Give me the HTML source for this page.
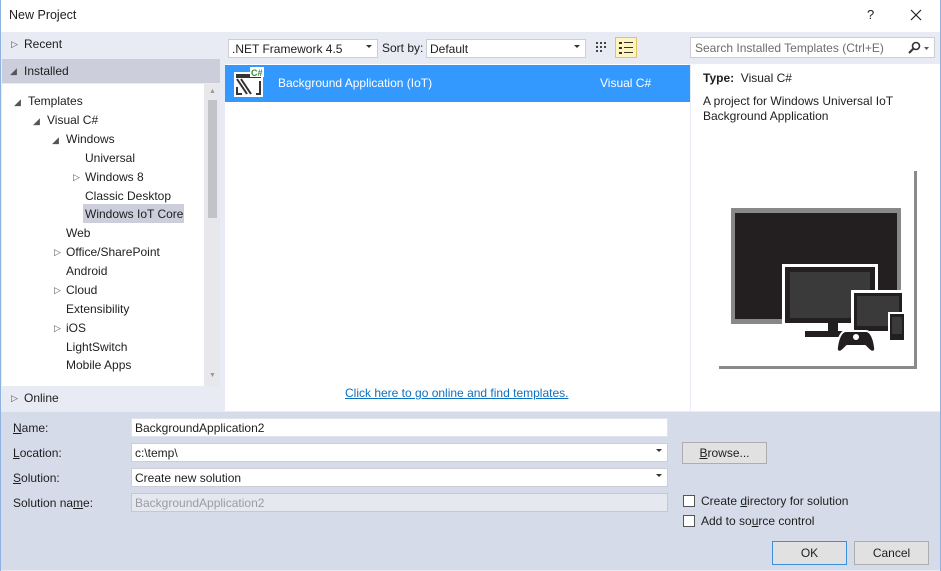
<!DOCTYPE html>
<html><head><meta charset="utf-8"><style>
*{margin:0;padding:0;box-sizing:border-box}
body{width:941px;height:571px;overflow:hidden;font-family:"Liberation Sans",sans-serif;font-size:12px;color:#1e1e1e;background:#e8eaf4;position:relative}
.a{position:absolute;white-space:nowrap}
.tri{position:absolute;font-size:9px;color:#555}
.t{position:absolute;white-space:nowrap;font-size:12px}
.box{position:absolute;background:#fff;border:1px solid #ccced6}
.dd{position:absolute;right:5px;top:5px;width:0;height:0;border-left:3px solid transparent;border-right:3px solid transparent;border-top:3px solid #333}
.btn{position:absolute;background:#e1e1e1;border:1px solid #adadad;text-align:center;line-height:21px}
.cb{position:absolute;width:12px;height:12px;background:#fff;border:1px solid #555}
</style></head><body>
<div class="a" style="left:0;top:0;width:941px;height:32px;background:#fff"></div>
<div class="a" style="left:9px;top:8px;font-size:12.5px">New Project</div>
<div class="a" style="left:867px;top:7px;font-size:13px">?</div>
<svg class="a" style="left:910px;top:9px" width="12" height="12"><path d="M1 1L11 11M11 1L1 11" stroke="#222" stroke-width="1.2"/></svg>
<div class="a" style="left:0;top:0;width:1px;height:571px;background:#8fb3e0"></div>
<div class="a" style="right:0;top:0;width:1px;height:571px;background:#8fb3e0"></div>

<div class="tri" style="left:11px;top:39px">▷</div><div class="t" style="left:24px;top:37px">Recent</div>
<div class="a" style="left:2px;top:59px;width:218px;height:24px;background:#cccedb"></div>
<div class="tri" style="left:10px;top:66px">◢</div><div class="t" style="left:24px;top:64px">Installed</div>
<div class="a" style="left:2px;top:84px;width:218px;height:302px;background:#fff"></div>
<div class="a" style="left:204px;top:84px;width:16px;height:302px;background:#e8e8ec"></div>
<div class="a" style="left:208px;top:100px;width:9px;height:118px;background:#c2c3c9"></div>
<div class="tri" style="left:209px;top:88px;font-size:7px;color:#999">▲</div>
<div class="tri" style="left:209px;top:372px;font-size:7px;color:#999">▼</div>
<div class="tri" style="left:14px;top:97px">◢</div><div class="t" style="left:28px;top:94px">Templates</div>
<div class="tri" style="left:33px;top:116px">◢</div><div class="t" style="left:47px;top:113px">Visual C#</div>
<div class="tri" style="left:52px;top:135px">◢</div><div class="t" style="left:66px;top:132px">Windows</div>
<div class="t" style="left:85px;top:151px">Universal</div>
<div class="tri" style="left:73px;top:172px">▷</div><div class="t" style="left:85px;top:170px">Windows 8</div>
<div class="t" style="left:85px;top:189px">Classic Desktop</div>
<div class="a" style="left:83px;top:204px;width:101px;height:19px;background:#cccedb"></div>
<div class="t" style="left:85px;top:207px">Windows IoT Core</div>
<div class="t" style="left:66px;top:226px">Web</div>
<div class="tri" style="left:54px;top:247px">▷</div><div class="t" style="left:66px;top:245px">Office/SharePoint</div>
<div class="t" style="left:66px;top:264px">Android</div>
<div class="tri" style="left:54px;top:285px">▷</div><div class="t" style="left:66px;top:283px">Cloud</div>
<div class="t" style="left:66px;top:302px">Extensibility</div>
<div class="tri" style="left:54px;top:323px">▷</div><div class="t" style="left:66px;top:321px">iOS</div>
<div class="t" style="left:66px;top:340px">LightSwitch</div>
<div class="t" style="left:66px;top:358px">Mobile Apps</div>
<div class="tri" style="left:11px;top:393px">▷</div><div class="t" style="left:24px;top:391px">Online</div>

<div class="box" style="left:228px;top:39px;width:150px;height:19px"><span class="a" style="left:3px;top:2px">.NET Framework 4.5</span><div class="dd"></div></div>
<div class="a" style="left:382px;top:41px">Sort by:</div>
<div class="box" style="left:426px;top:39px;width:160px;height:19px"><span class="a" style="left:3px;top:2px">Default</span><div class="dd"></div></div>
<svg class="a" style="left:594px;top:40px" width="16" height="16"><g fill="#444"><rect x="2" y="2" width="2" height="2"/><rect x="6" y="2" width="2" height="2"/><rect x="10" y="2" width="2" height="2"/><rect x="2" y="6" width="2" height="2"/><rect x="6" y="6" width="2" height="2"/><rect x="10" y="6" width="2" height="2"/><rect x="2" y="10" width="2" height="2"/><rect x="6" y="10" width="2" height="2"/></g></svg>
<div class="a" style="left:615px;top:37px;width:22px;height:21px;background:#fdf4bf;border:1px solid #e5c365"></div>
<svg class="a" style="left:618px;top:40px" width="16" height="16"><g fill="#333"><rect x="1" y="2" width="3" height="2"/><rect x="6" y="2" width="9" height="1"/><rect x="1" y="7" width="3" height="2"/><rect x="6" y="7" width="9" height="1"/><rect x="1" y="12" width="3" height="2"/><rect x="6" y="12" width="9" height="1"/></g></svg>
<div class="box" style="left:690px;top:37px;width:245px;height:21px"><span class="a" style="left:4px;top:3px;color:#6d6d6d">Search Installed Templates (Ctrl+E)</span>
<svg class="a" style="left:216px;top:3px" width="24" height="14"><circle cx="9" cy="5" r="3.5" fill="none" stroke="#333" stroke-width="1.6"/><line x1="6.5" y1="7.5" x2="2" y2="12" stroke="#333" stroke-width="2"/><path d="M17 6h5l-2.5 3z" fill="#555"/></svg></div>

<div class="a" style="left:225px;top:64px;width:465px;height:347px;background:#fff"></div>
<div class="a" style="left:225px;top:65px;width:465px;height:37px;background:#3399ff"></div>
<svg class="a" style="left:233px;top:67px" width="32" height="32"><rect x="1" y="5" width="29" height="25" fill="#fff"/><rect x="3" y="7" width="25" height="4" fill="#333"/><path d="M4 12l10 15M8 12l10 15" stroke="#333" stroke-width="2"/><path d="M4 20v7h5M27 14v13h-4" stroke="#333" stroke-width="2" fill="none"/><rect x="17" y="0" width="14" height="10" fill="#fff"/><text x="18" y="9" font-size="9" font-weight="bold" fill="#388a34" font-family="Liberation Sans">C#</text></svg>
<div class="a" style="left:278px;top:76px;color:#fff">Background Application (IoT)</div>
<div class="a" style="left:600px;top:76px;color:#fff">Visual C#</div>
<div class="a" style="left:345px;top:386px;color:#0e70c0;text-decoration:underline">Click here to go online and find templates.</div>

<div class="a" style="left:691px;top:64px;width:249px;height:347px;background:#fff"></div>
<div class="a" style="left:703px;top:71px"><b>Type:</b>&nbsp; Visual C#</div>
<div class="a" style="left:703px;top:94px;line-height:15px">A project for Windows Universal IoT<br>Background Application</div>
<svg class="a" style="left:714px;top:168px" width="206" height="202">
<rect x="5" y="3" width="198" height="198" fill="#8a8a8a"/>
<rect x="2" y="0" width="198" height="198" fill="#fff"/>
<rect x="17" y="40" width="170" height="116" fill="#888"/>
<rect x="21" y="45" width="162" height="106" fill="#231f20"/>
<rect x="68" y="96" width="96" height="62" fill="#fff"/>
<rect x="71" y="99" width="90" height="56" fill="#231f20"/>
<rect x="76" y="104" width="80" height="46" fill="#3a3a3a"/>
<rect x="114" y="155" width="10" height="8" fill="#231f20"/><rect x="91" y="163" width="56" height="6" fill="#231f20"/>
<rect x="137" y="122" width="54" height="44" fill="#fff"/>
<rect x="140" y="125" width="48" height="38" fill="#231f20"/><rect x="143" y="128" width="42" height="30" fill="#3a3a3a"/>
<rect x="174" y="144" width="18" height="30" fill="#fff"/><rect x="176" y="146" width="14" height="26" fill="#231f20"/><rect x="178" y="149" width="10" height="17" fill="#3a3a3a"/>
<path d="M132 163h20c5 0 8 8 9 16 1 5-3 6-6 3l-4-4h-18l-4 4c-3 3-7 2-6-3 1-8 4-16 9-16z" fill="#231f20" stroke="#fff" stroke-width="2"/>
<circle cx="142" cy="169" r="3" fill="#fff"/>
</svg>

<div class="a" style="left:1px;top:412px;width:939px;height:158px;background:#d6dbe9"></div>
<div class="a" style="left:13px;top:421px"><u>N</u>ame:</div>
<div class="a" style="left:13px;top:446px"><u>L</u>ocation:</div>
<div class="a" style="left:13px;top:471px"><u>S</u>olution:</div>
<div class="a" style="left:13px;top:496px">Solution na<u>m</u>e:</div>
<div class="box" style="left:131px;top:418px;width:537px;height:19px;border-color:#e0e3ec"><span class="a" style="left:3px;top:2px">BackgroundApplication2</span></div>
<div class="box" style="left:131px;top:443px;width:537px;height:19px"><span class="a" style="left:3px;top:2px">c:\temp\</span><div class="dd"></div></div>
<div class="box" style="left:131px;top:468px;width:537px;height:19px"><span class="a" style="left:3px;top:2px">Create new solution</span><div class="dd"></div></div>
<div class="a" style="left:131px;top:493px;width:537px;height:19px;background:#e6e8ef;border:1px solid #c5c8d2"><span class="a" style="left:3px;top:2px;color:#9a9ca3">BackgroundApplication2</span></div>
<div class="btn" style="left:682px;top:442px;width:85px;height:22px"><u>B</u>rowse...</div>
<div class="cb" style="left:683px;top:495px"></div><div class="a" style="left:701px;top:494px">Create <u>d</u>irectory for solution</div>
<div class="cb" style="left:683px;top:515px"></div><div class="a" style="left:701px;top:514px">Add to so<u>u</u>rce control</div>
<div class="btn" style="left:772px;top:541px;width:75px;height:24px;border:1px solid #3c8fdc;line-height:22px">OK</div>
<div class="btn" style="left:854px;top:541px;width:75px;height:24px;line-height:22px">Cancel</div>
</body></html>
